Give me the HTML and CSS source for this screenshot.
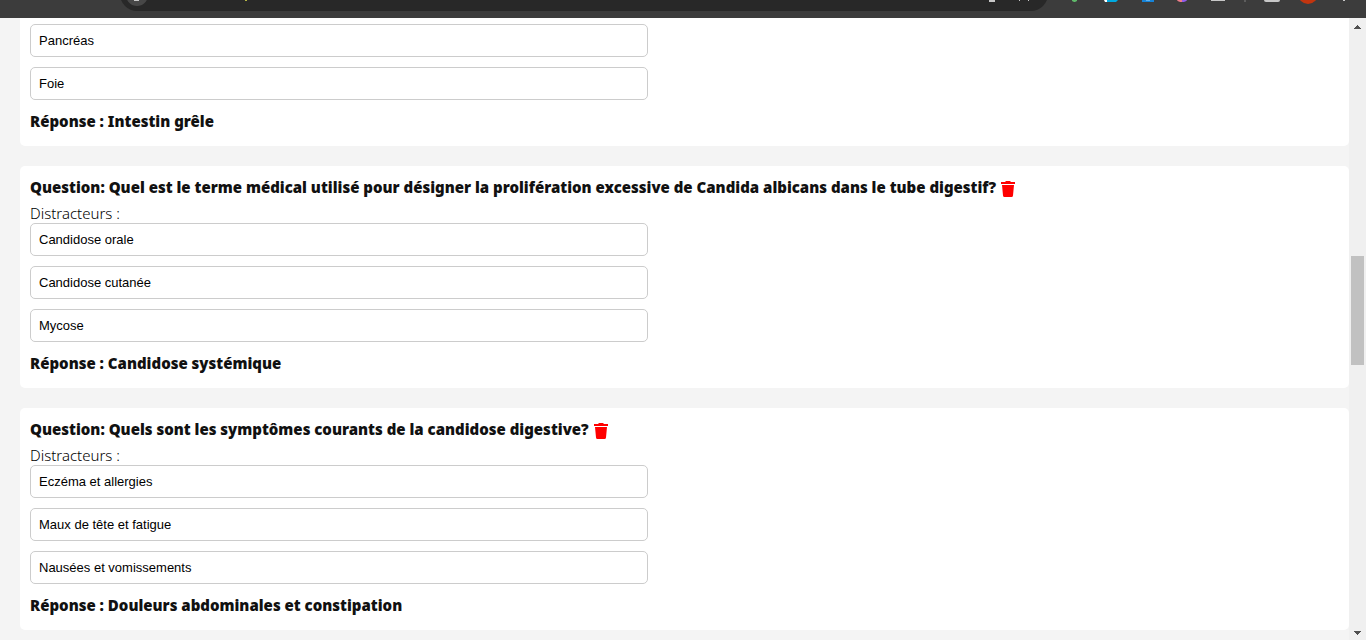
FILE: index.html
```
<!DOCTYPE html>
<html lang="fr">
<head>
<meta charset="utf-8">
<meta name="viewport" content="width=device-width, initial-scale=1">
<title>Questions</title>
<link rel="stylesheet" href="styles.css">
</head>
<body>
<svg class="defs" aria-hidden="true">
  <symbol id="trash" viewBox="0 0 14 16">
    <path d="M0 1h4l1-1h4l1 1h4v2H0zM1 4h12l-1 10.500q-.1 1.500-1.500 1.500h-7q-1.400 0-1.500-1.500z"/>
  </symbol>
</svg>
<header class="toolbar">
  <div class="address">
    <svg class="address-start" viewBox="0 0 140 11" aria-hidden="true">
      <circle cx="17" cy="-5" r="11" fill="#474747"/>
      <path d="M14 0h5v1h-5z" fill="#c7c7c7"/>
      <path d="M125 0h2v1h-2z" fill="#b5b544"/>
    </svg>
    <svg class="address-end" viewBox="0 0 60 11" aria-hidden="true">
      <path d="M1 0h6v2H1zM31 0h1v1h-1zM40 0h1v1h-1z" fill="#c7c7c7"/>
    </svg>
  </div>
  <svg class="extensions" viewBox="0 0 318 18" aria-hidden="true">
    <path d="M24 0h5v1l-2 1h-1l-2-1z" fill="#5fb96a"/>
    <path d="M56 0h3v2h-2z" fill="#fff"/>
    <path d="M59 0h11l-2 2h-9z" fill="#00a9e0"/>
    <path d="M94 0h12v2H94z" fill="#1683d8"/>
    <path d="M98 0h4v1h-4z" fill="#5fb0ed"/>
    <path d="M129 0h5v2q-4 0-5-2z" fill="#ef7d88"/>
    <path d="M134 0h5q-1 2-5 2z" fill="#8f5be8"/>
    <path d="M163 0h14v1h-14z" fill="#c7c7c7"/>
    <path d="M196 0h2v2h-2z" fill="#5d5d5d"/>
    <path d="M216 0h16q0 2-2 2h-12q-2 0-2-2z" fill="#c7c7c7"/>
    <circle cx="260" cy="-6" r="10" fill="#c2350f"/>
    <path d="M295 0h2v1h-2z" fill="#c7c7c7"/>
  </svg>
</header>
<div class="viewport">
  <main class="questions">
    <section class="card card-continued">
      <div class="choices">
        <input class="choice" type="text" aria-label="Distracteur 2" value="Pancréas">
        <input class="choice" type="text" aria-label="Distracteur 3" value="Foie">
      </div>
      <p class="answer">Réponse : Intestin grêle</p>
    </section>
    <section class="card">
      <h2 class="question">Question: Quel est le terme médical utilisé pour désigner la prolifération excessive de Candida albicans dans le tube digestif?
        <button class="delete" type="button" aria-label="Supprimer"><svg class="trash"><use href="#trash"/></svg></button></h2>
      <label class="label" for="q2">Distracteurs :</label>
      <div class="choices">
        <input class="choice" id="q2" type="text" value="Candidose orale">
        <input class="choice" type="text" aria-label="Distracteur 2" value="Candidose cutanée">
        <input class="choice" type="text" aria-label="Distracteur 3" value="Mycose">
      </div>
      <p class="answer">Réponse : Candidose systémique</p>
    </section>
    <section class="card">
      <h2 class="question">Question: Quels sont les symptômes courants de la candidose digestive?
        <button class="delete" type="button" aria-label="Supprimer"><svg class="trash"><use href="#trash"/></svg></button></h2>
      <label class="label" for="q3">Distracteurs :</label>
      <div class="choices">
        <input class="choice" id="q3" type="text" value="Eczéma et allergies">
        <input class="choice" type="text" aria-label="Distracteur 2" value="Maux de tête et fatigue">
        <input class="choice" type="text" aria-label="Distracteur 3" value="Nausées et vomissements">
      </div>
      <p class="answer">Réponse : Douleurs abdominales et constipation</p>
    </section>
  </main>
  <div class="scrollbar" aria-hidden="true">
    <svg class="arrow" viewBox="0 0 7 4"><path d="M3 0h1v1h1v1h1v1h1v1H0V3h1V2h1V1h1z"/></svg>
    <div class="track"><div class="thumb"></div></div>
    <svg class="arrow" viewBox="0 0 7 4"><path d="M0 0h7v1H6v1H5v1H4v1H3V3H2V2H1V1H0z"/></svg>
  </div>
</div>
</body>
</html>
```
FILE: styles.css
```
* { box-sizing: border-box; }

body {
  display: flex;
  flex-direction: column;
  height: 100vh;
  margin: 0;
  overflow: hidden;
  background: #f4f4f4;
  color: #000;
  font-family: "Noto Sans", "Open Sans", sans-serif;
  font-size: 15px;
}

.defs { display: none; }

.toolbar {
  display: flex;
  flex: none;
  height: 18px;
  padding-left: 120px;
  overflow: hidden;
  background: #3c3c3c;
}

.address {
  display: flex;
  flex: 1;
  align-items: flex-end;
  justify-content: space-between;
  height: 34px;
  margin-top: -23px;
  border-radius: 17px;
  background: #282828;
}

.address-start { width: 140px; height: 11px; }
.address-end { width: 60px; height: 11px; }
.extensions { width: 318px; height: 18px; }

.viewport {
  display: flex;
  flex: 1;
  min-height: 0;
}

.questions {
  display: flex;
  flex: 1;
  flex-direction: column;
  gap: 20px;
  padding-left: 20px;
  overflow: hidden;
}

.card {
  flex: none;
  padding: 10px 10px 12px;
  border-radius: 5px;
  background: #fff;
}

.card-continued {
  padding-top: 6px;
  border-radius: 0 0 5px 5px;
}

.question,
.answer {
  margin: 0;
  color: #111;
  font-size: 15px;
  font-weight: 900;
  line-height: 22px;
}

.question { padding-bottom: 6px; }
.answer { padding-bottom: 2px; }

.delete {
  margin-left: 1px;
  padding: 0;
  border: 0;
  background: none;
  line-height: 16px;
  vertical-align: middle;
  cursor: pointer;
}

.trash {
  display: block;
  width: 14px;
  height: 16px;
  fill: #f00;
}

.label {
  display: block;
  font-weight: 300;
  line-height: 19px;
}

.choices {
  display: flex;
  flex-direction: column;
  gap: 10px;
  max-width: 618px;
  padding-bottom: 10px;
}

.choice {
  width: 100%;
  height: 33px;
  padding: 8px;
  border: 1px solid #ccc;
  border-radius: 5px;
  background: #fff;
  color: #000;
  font-family: "Liberation Sans", Arial, sans-serif;
  font-size: 13px;
}

.scrollbar {
  display: flex;
  flex: none;
  flex-direction: column;
  align-items: center;
  justify-content: space-between;
  width: 17px;
  padding: 7px 0 5px;
  background: #f0f0f0;
}

.arrow {
  width: 7px;
  height: 4px;
  fill: #505050;
}

.track {
  flex: 1;
  width: 13px;
  padding-top: 227px;
}

.thumb {
  height: 29%;
  background: #c1c1c1;
}
```
